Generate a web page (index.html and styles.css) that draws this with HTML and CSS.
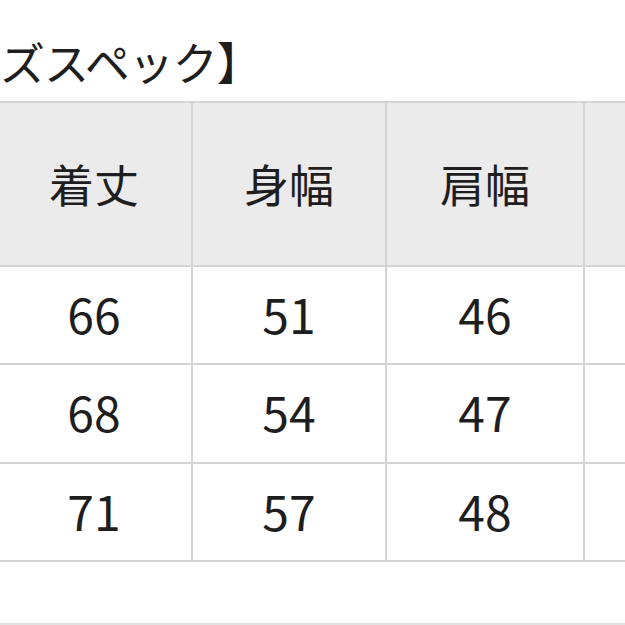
FILE: index.html
```html
<!DOCTYPE html>
<html lang="ja">
<head>
<meta charset="utf-8">
<link rel="stylesheet" href="styles.css">
</head>
<body>
<div class="page">
  <div class="title">ズスペック】</div>
  <div class="spec">
    <div class="cell head">着丈</div>
    <div class="cell head">身幅</div>
    <div class="cell head">肩幅</div>
    <div class="cell head"></div>
    <div class="cell">66</div>
    <div class="cell">51</div>
    <div class="cell">46</div>
    <div class="cell"></div>
    <div class="cell">68</div>
    <div class="cell">54</div>
    <div class="cell">47</div>
    <div class="cell"></div>
    <div class="cell">71</div>
    <div class="cell">57</div>
    <div class="cell">48</div>
    <div class="cell"></div>
  </div>
  <div class="bottom-line"></div>
</div>
</body>
</html>
```
FILE: styles.css
```css
html, body {
  margin: 0;
  padding: 0;
  background: #ffffff;
}
body {
  width: 625px;
  height: 625px;
  overflow: hidden;
  font-family: "Noto Sans CJK JP", "Noto Sans", sans-serif;
  color: #1e1e1e;
}
.page {
  width: 625px;
  height: 625px;
  display: flex;
  flex-direction: column;
  overflow: hidden;
}
.title {
  box-sizing: border-box;
  height: 101px;
  padding-top: 38px;
  font-size: 45px;
  line-height: 48px;
  letter-spacing: -1px;
  white-space: nowrap;
}
.spec {
  display: grid;
  grid-template-columns: 196px 194px 198px 195px;
  grid-template-rows: 164px 98px 99px 98px;
  margin-left: -3px;
  border-top: 2px solid #d4d4d4;
  width: max-content;
}
.cell {
  display: flex;
  align-items: center;
  justify-content: center;
  box-sizing: border-box;
  padding-bottom: 5px;
  border-right: 2px solid #d4d4d4;
  border-bottom: 2px solid #d4d4d4;
  font-size: 48px;
  line-height: 1;
  background: #ffffff;
}
.cell.head {
  padding-bottom: 2px;
  background: #ebebeb;
  font-size: 45px;
  font-weight: 400;
}
.bottom-line {
  margin-top: 61px;
  height: 2px;
  background: #e2e2e2;
}
```
